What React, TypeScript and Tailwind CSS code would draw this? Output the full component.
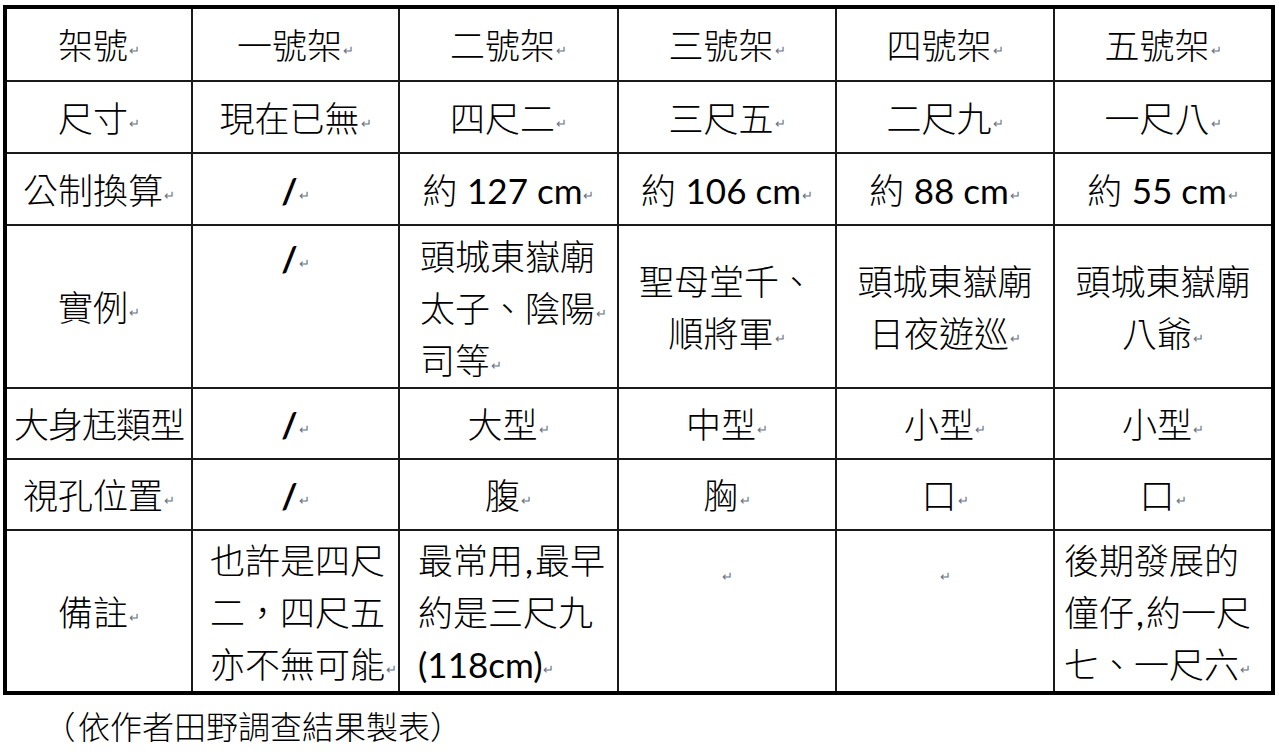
import React from "react";

const font = "font-['Lato','Noto_Sans_CJK_TC',sans-serif]";

function Mark() {
  return <span className="ml-[1px] align-middle text-[13px] leading-[0] text-gray-500">↵</span>;
}

function Num({ children }: { children: React.ReactNode }) {
  return <span className="font-normal">{children}</span>;
}

function Slash() {
  return <span className="font-bold">/</span>;
}

const widths = ["w-[187px]", "w-[207px]", "w-[219px]", "w-[218px]", "w-[218px]", "w-[219px]"];

const cell = "border-2 border-[#1a1a1a] text-center align-middle p-0";
const mid = `${cell} pt-[1px]`;

export default function App() {
  return (
    <div className={`bg-white min-h-screen pl-[3px] pt-[5px] text-black ${font} font-light`}>
      <table className="table-fixed border-collapse border-[4px] border-black w-[1272px] text-[35px] leading-[52px]">
        <colgroup>
          {widths.map((w, i) => (
            <col key={i} className={w} />
          ))}
        </colgroup>
        <tbody>
          <tr className="h-[74px]">
            <td className={mid}>架號<Mark /></td>
            <td className={mid}>一號架<Mark /></td>
            <td className={mid}>二號架<Mark /></td>
            <td className={mid}>三號架<Mark /></td>
            <td className={mid}>四號架<Mark /></td>
            <td className={mid}>五號架<Mark /></td>
          </tr>
          <tr className="h-[72px]">
            <td className={mid}>尺寸<Mark /></td>
            <td className={mid}>現在已無<Mark /></td>
            <td className={mid}>四尺二<Mark /></td>
            <td className={mid}>三尺五<Mark /></td>
            <td className={mid}>二尺九<Mark /></td>
            <td className={mid}>一尺八<Mark /></td>
          </tr>
          <tr className="h-[72px]">
            <td className={mid}>公制換算<Mark /></td>
            <td className={mid}><Slash /><Mark /></td>
            <td className={mid}>約 <Num>127 cm</Num><Mark /></td>
            <td className={mid}>約 <Num>106 cm</Num><Mark /></td>
            <td className={mid}>約 <Num>88 cm</Num><Mark /></td>
            <td className={mid}>約 <Num>55 cm</Num><Mark /></td>
          </tr>
          <tr className="h-[163px]">
            <td className={mid}>實例<Mark /></td>
            <td className={`${cell} !align-top pt-[6px]`}><Slash /><Mark /></td>
            <td className={`${cell} !text-left pl-[20px] pt-[2px]`}>
              <div>頭城東嶽廟</div>
              <div>太子、陰陽<Mark /></div>
              <div>司等<Mark /></div>
            </td>
            <td className={mid}>
              <div className="text-left pl-[20px]">聖母堂千、</div>
              <div>順將軍<Mark /></div>
            </td>
            <td className={mid}>
              <div>頭城東嶽廟</div>
              <div>日夜遊巡<Mark /></div>
            </td>
            <td className={mid}>
              <div>頭城東嶽廟</div>
              <div>八爺<Mark /></div>
            </td>
          </tr>
          <tr className="h-[71px]">
            <td className={`${mid} whitespace-nowrap tracking-[-1px]`}>大身尪類型</td>
            <td className={mid}><Slash /><Mark /></td>
            <td className={mid}>大型<Mark /></td>
            <td className={mid}>中型<Mark /></td>
            <td className={mid}>小型<Mark /></td>
            <td className={mid}>小型<Mark /></td>
          </tr>
          <tr className="h-[71px]">
            <td className={mid}>視孔位置<Mark /></td>
            <td className={mid}><Slash /><Mark /></td>
            <td className={mid}>腹<Mark /></td>
            <td className={mid}>胸<Mark /></td>
            <td className={mid}>口<Mark /></td>
            <td className={mid}>口<Mark /></td>
          </tr>
          <tr className="h-[163px]">
            <td className={mid}>備註<Mark /></td>
            <td className={`${cell} !text-left pl-[17px] pt-[2px] whitespace-nowrap`}>
              <div>也許是四尺</div>
              <div>二，四尺五</div>
              <div>亦不無可能<Mark /></div>
            </td>
            <td className={`${cell} !text-left pl-[18px] pt-[2px] whitespace-nowrap`}>
              <div>最常用<span className="font-normal mx-[2px]">,</span>最早</div>
              <div>約是三尺九</div>
              <div><Num>(118cm)</Num><Mark /></div>
            </td>
            <td className={`${cell} !align-top pt-[14px]`}><Mark /></td>
            <td className={`${cell} !align-top pt-[14px]`}><Mark /></td>
            <td className={`${cell} !text-left pl-[9px] pt-[2px] whitespace-nowrap`}>
              <div>後期發展的</div>
              <div>僮仔<span className="font-normal mx-[2px]">,</span>約一尺</div>
              <div>七、一尺六<Mark /></div>
            </td>
          </tr>
        </tbody>
      </table>
      <div className="pl-[38px] pt-[12px] text-[32px] leading-[40px]">
        <span className="inline-block w-[37px] text-center">（</span>
        依作者田野調查結果製表
        <span className="inline-block w-[32px] text-left">）</span>
      </div>
    </div>
  );
}
